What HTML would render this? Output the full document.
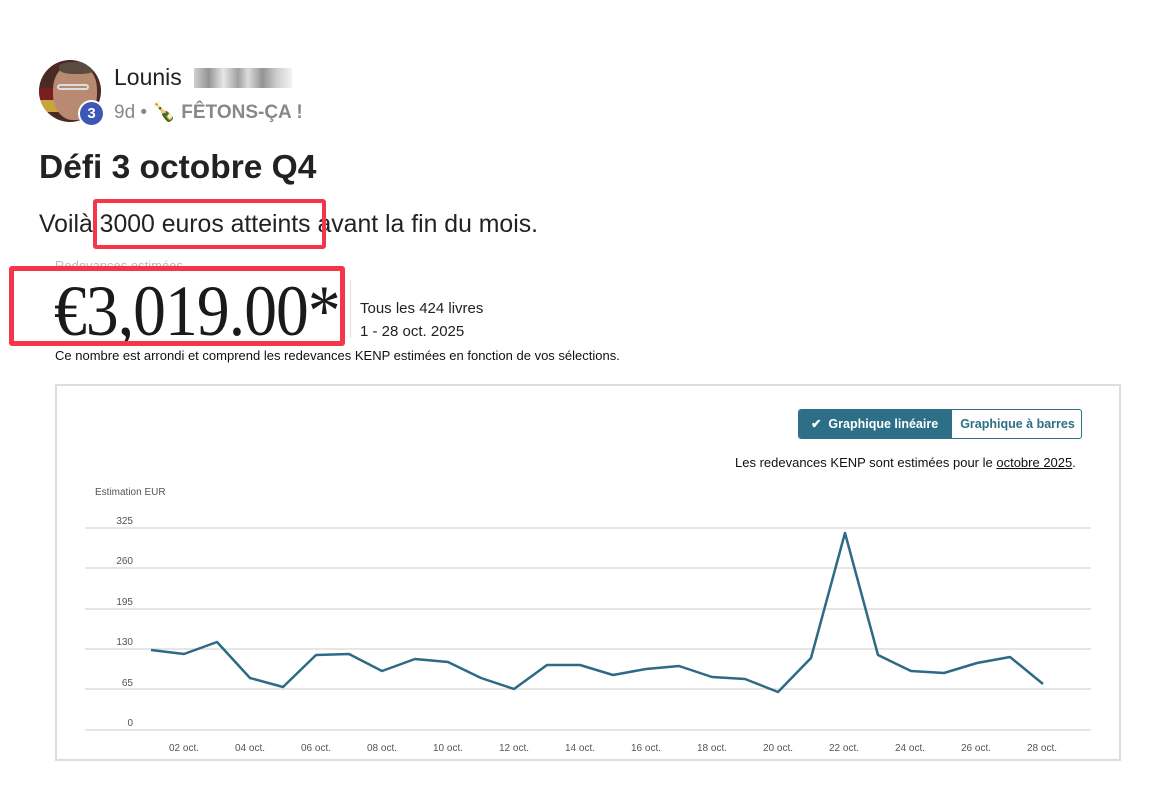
<!DOCTYPE html>
<html><head><meta charset="utf-8"><style>
*{margin:0;padding:0;box-sizing:border-box}
body{width:1149px;height:795px;background:#fff;position:relative;overflow:hidden;font-family:"Liberation Sans",sans-serif;color:#222}
.a{position:absolute;white-space:nowrap}
</style></head><body>
<div class="a" style="left:39px;top:60px;width:62px;height:62px;border-radius:50%;overflow:hidden;background:#4a2a22">
 <div class="a" style="left:0;top:40px;width:30px;height:12px;background:#c9a43a"></div>
 <div class="a" style="left:0;top:28px;width:25px;height:12px;background:#7a1f1f"></div>
 <div class="a" style="left:14px;top:4px;width:44px;height:56px;border-radius:45%;background:#b98a72"></div>
 <div class="a" style="left:20px;top:2px;width:36px;height:12px;border-radius:40%;background:#5a4a40"></div>
 <div class="a" style="left:18px;top:24px;width:32px;height:6px;border:2px solid #ddd;border-radius:3px"></div>
</div>
<div class="a" style="left:78px;top:100px;width:27px;height:27px;border-radius:50%;background:#3d58b4;border:2px solid #fff;color:#fff;font-weight:bold;font-size:15px;text-align:center;line-height:23px">3</div>
<div class="a" style="left:114px;top:64px;font-size:23px;color:#222">Lounis</div>
<div class="a" style="left:194px;top:68px;width:98px;height:20px;background:linear-gradient(90deg,#bbb,#666 15%,#ddd 30%,#777 45%,#ccc 55%,#666 70%,#bbb 85%,#eee);opacity:.7"></div>
<div class="a" style="left:114px;top:100px;font-size:19px;color:#888">9d • 🍾 <b>FÊTONS-ÇA !</b></div>
<div class="a" style="left:39px;top:149px;font-size:33.5px;font-weight:bold;color:#222">Défi 3 octobre Q4</div>
<div class="a" style="left:39px;top:211px;font-size:24.8px;color:#222">Voilà 3000 euros atteints avant la fin du mois.</div>
<div class="a" style="left:93px;top:199px;width:233px;height:50px;border:4px solid #f5364a;border-radius:3px"></div>
<div class="a" style="left:55px;top:258px;font-size:13px;color:#bbb">Redevances estimées</div>
<div class="a" style="left:54px;top:270px;font-family:'Liberation Serif',serif;font-size:72px;color:#1a1a1a;transform:scaleX(.91);transform-origin:left top;letter-spacing:-1px">€3,019.00*</div>
<div class="a" style="left:350px;top:280px;width:1px;height:58px;background:#ddd"></div>
<div class="a" style="left:360px;top:300px;font-size:15px;color:#222">Tous les 424 livres</div>
<div class="a" style="left:360px;top:323px;font-size:15px;color:#222">1 - 28 oct. 2025</div>
<div class="a" style="left:9px;top:266px;width:336px;height:80px;border:5px solid #f5364a;border-radius:3px"></div>
<div class="a" style="left:55px;top:348px;font-size:13px;color:#111">Ce nombre est arrondi et comprend les redevances KENP estimées en fonction de vos sélections.</div>
<div class="a" style="left:55px;top:384px;width:1066px;height:377px;border:2px solid #ddd"></div>
<div class="a" style="left:798px;top:409px;width:284px;height:30px;border:1px solid #2d6f86;border-radius:3px;overflow:hidden;font-size:12.5px;font-weight:bold">
 <div class="a" style="left:0;top:0;width:153px;height:30px;background:#2d6f86;color:#fff;line-height:29px;padding-left:12px">✔&nbsp; Graphique linéaire</div>
 <div class="a" style="left:153px;top:0;width:131px;height:30px;color:#2d6f86;line-height:29px;text-align:center">Graphique à barres</div>
</div>
<div class="a" style="left:735px;top:455px;font-size:13px;color:#111">Les redevances KENP sont estimées pour le <u>octobre 2025</u>.</div>
<svg class="a" style="left:0;top:0" width="1149" height="795">
<g font-family="Liberation Sans,sans-serif" font-size="10" fill="#555">
<text x="95" y="495">Estimation EUR</text>
<text x="133" y="524" text-anchor="end">325</text><text x="133" y="564" text-anchor="end">260</text><text x="133" y="605" text-anchor="end">195</text><text x="133" y="645" text-anchor="end">130</text><text x="133" y="686" text-anchor="end">65</text><text x="133" y="726" text-anchor="end">0</text>
</g>
<g stroke="#ddd" stroke-width="1.5">
<line x1="85" x2="1091" y1="528" y2="528"/><line x1="85" x2="1091" y1="568" y2="568"/><line x1="85" x2="1091" y1="609" y2="609"/><line x1="85" x2="1091" y1="649" y2="649"/><line x1="85" x2="1091" y1="689" y2="689"/><line x1="85" x2="1091" y1="730" y2="730"/>
</g>
<g font-family="Liberation Sans,sans-serif" font-size="10" fill="#555" text-anchor="middle">
<text x="184" y="751">02 oct.</text><text x="250" y="751">04 oct.</text><text x="316" y="751">06 oct.</text><text x="382" y="751">08 oct.</text><text x="448" y="751">10 oct.</text><text x="514" y="751">12 oct.</text><text x="580" y="751">14 oct.</text><text x="646" y="751">16 oct.</text><text x="712" y="751">18 oct.</text><text x="778" y="751">20 oct.</text><text x="844" y="751">22 oct.</text><text x="910" y="751">24 oct.</text><text x="976" y="751">26 oct.</text><text x="1042" y="751">28 oct.</text>
</g>
<polyline fill="none" stroke="#2d6a86" stroke-width="2.5" stroke-linejoin="round" points="151,650 184,654 217,642 250,678 283,687 316,655 349,654 382,671 415,659 448,662 481,678 514,689 547,665 580,665 613,675 646,669 679,666 712,677 745,679 778,692 811,658 845,533 878,655 911,671 944,673 977,663 1010,657 1043,684"/>
</svg>
</body></html>
